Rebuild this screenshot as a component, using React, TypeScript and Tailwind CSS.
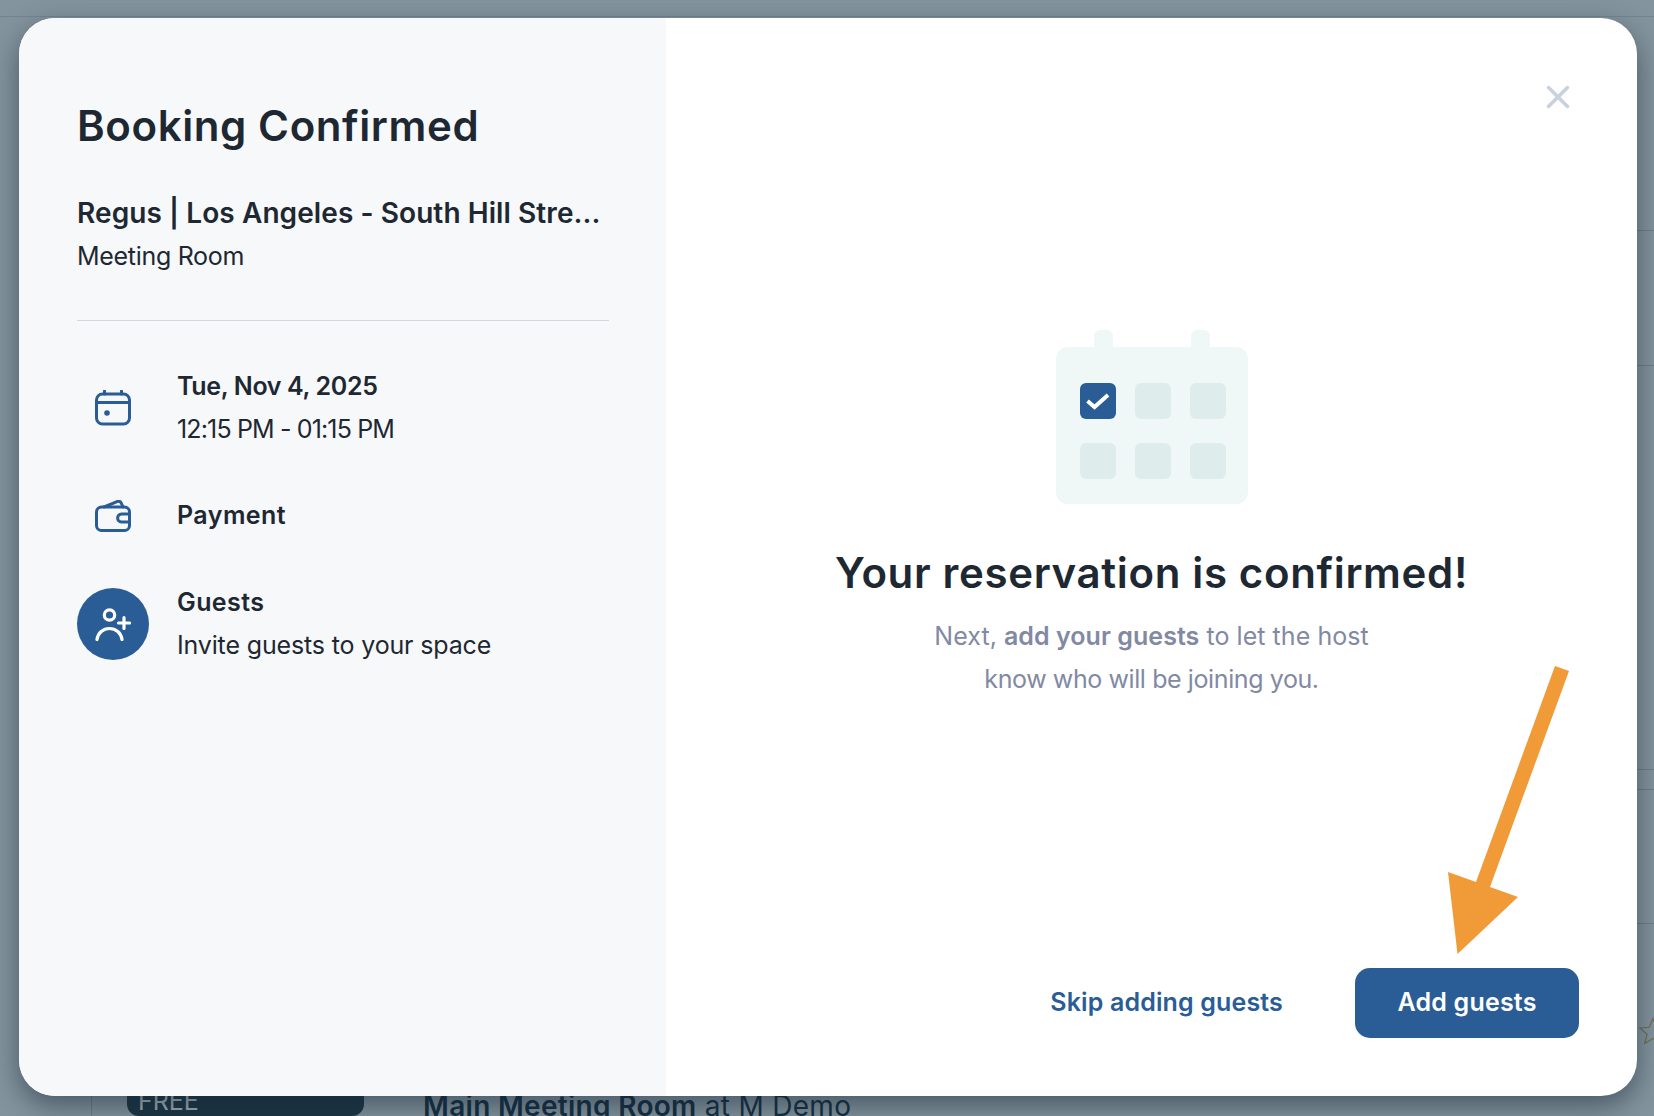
import { X } from "lucide-react"

function CalendarIcon() {
  return (
    <svg width="36" height="36" viewBox="0 0 36 36" fill="none" stroke="#2a5d96" strokeWidth="3" strokeLinecap="round">
      <rect x="1.500" y="4" width="33" height="30" rx="6" />
      <path d="M1.500 12.500H34.500" />
      <path d="M9.500 1V4M26.500 1V4" />
      <circle cx="12" cy="23" r="2.800" fill="#2a5d96" stroke="none" />
    </svg>
  )
}

function WalletIcon() {
  return (
    <svg width="36" height="32" viewBox="0 0 36 32" fill="none" stroke="#2a5d96" strokeWidth="3" strokeLinejoin="round" strokeLinecap="round">
      <rect x="1.500" y="7" width="33" height="23.400" rx="5" />
      <path d="M9 7L22 1.600C24 0.900 25.500 1.600 26.200 3L28 7" />
      <path d="M34.500 14H26.500C24 14 22.600 16 22.600 18C22.600 20 24 22 26.500 22H34.500" />
    </svg>
  )
}

function UserPlusIcon() {
  return (
    <svg width="36" height="33" viewBox="0 0 36 33" fill="none" stroke="#fff" strokeWidth="3.200" strokeLinecap="round">
      <circle cx="14.500" cy="7" r="5.200" />
      <path d="M2 31.500C3 25 8 20.500 14.500 20.500C21 20.500 26 25 27 31.500" />
      <path d="M23.500 15H34.500M29 9.500V20.500" />
    </svg>
  )
}

function Illustration() {
  const cell = "h-9 w-9 rounded-[6px] bg-[#dfecec]"
  return (
    <div className="flex w-[192px] flex-col items-stretch">
      <div className="flex h-[17px] justify-between px-[38px]">
        <div className="w-[19px] rounded-t-[6px] bg-[#eff7f7]" />
        <div className="w-[19px] rounded-t-[6px] bg-[#eff7f7]" />
      </div>
      <div className="grid h-[157px] grid-cols-[36px_36px_36px] content-start gap-x-[19px] gap-y-[24px] rounded-[12px] bg-[#eff7f7] pl-[24px] pt-[36px]">
        <div className="flex h-9 w-9 items-center justify-center rounded-[6px] bg-[#2a5d96]">
          <svg width="24" height="18" viewBox="0 0 24 18" fill="none" stroke="#fff" strokeWidth="4">
            <path d="M1.500 9L8.500 15L22 3" />
          </svg>
        </div>
        <div className={cell} />
        <div className={cell} />
        <div className={cell} />
        <div className={cell} />
        <div className={cell} />
      </div>
    </div>
  )
}

export default function App() {
  return (
    <div className="relative h-[1116px] w-[1654px] overflow-hidden bg-[#84949e] font-['Inter',sans-serif]">
      {/* page behind the backdrop */}
      <div className="h-[17px] border-b border-[#74858f]" />
      <div className="flex flex-col items-end">
        <div className="mt-[213px] h-px w-[20px] bg-[#6d7e88]" />
        <div className="mt-[134px] h-px w-[20px] bg-[#6d7e88]" />
        <div className="mt-[403px] h-px w-[20px] bg-[#6d7e88]" />
        <div className="mt-[19px] h-px w-[20px] bg-[#6d7e88]" />
        <div className="mt-[133px] h-px w-[20px] bg-[#6d7e88]" />
      </div>
      <div className="ml-[91px] mt-[88px] flex h-[104px] items-start border-l border-[#6d7e88] pl-[35px]">
        <div className="mr-[59px] h-[104px] w-[237px] rounded-[12px] bg-[#1c3442] pl-[11px] pt-[74px] text-[25px] leading-[30px] text-[#a9b4ba]">
          FREE
        </div>
        <div className="mt-[78px] text-[28px] leading-[32px] tracking-[0.3px] text-[#142e40]">
          <span className="font-semibold">Main Meeting Room</span> at M Demo
        </div>
      </div>
      <svg className="absolute right-[-14px] top-[1014px]" width="30" height="34" viewBox="0 0 24 24" fill="none" stroke="#736f4a" strokeWidth="1">
        <path d="M12 2l3 7 7.500.6-5.700 5 1.800 7.400L12 18l-6.600 4 1.800-7.400-5.700-5L9 9z" />
      </svg>

      {/* modal */}
      <div className="absolute left-[19px] top-[18px] flex h-[1078px] w-[1618px] overflow-hidden rounded-[36px] bg-white shadow-[0_10px_28px_rgba(20,40,55,0.55)]">
        <div className="flex w-[647px] shrink-0 flex-col bg-[#f7f8fa] pl-[58px] pr-[57px] pt-[82px] text-[#1e2832]">
          <h1 className="text-[42px] font-semibold leading-[52px] tracking-[0.6px]">Booking Confirmed</h1>
          <div className="mt-[43px] truncate text-[28px] font-semibold leading-[36px] tracking-[0.08px]">
            Regus | Los Angeles - South Hill Stre...
          </div>
          <div className="mt-[7px] text-[25px] leading-[36px] tracking-[-0.3px]">Meeting Room</div>
          <div className="mt-[46px] h-px bg-[#d3d8df]" />
          <div className="mt-[44px] flex items-center">
            <div className="flex w-[100px] shrink-0 pl-[18px]">
              <CalendarIcon />
            </div>
            <div>
              <div className="text-[25px] font-semibold leading-[43px] tracking-[-0.35px]">Tue, Nov 4, 2025</div>
              <div className="text-[25px] leading-[43px] tracking-[-0.85px]">12:15 PM - 01:15 PM</div>
            </div>
          </div>
          <div className="mt-[43px] flex items-center">
            <div className="flex w-[100px] shrink-0 pl-[18px]">
              <WalletIcon />
            </div>
            <div className="text-[25px] font-semibold leading-[43px] tracking-[0.45px]">Payment</div>
          </div>
          <div className="mt-[44px] flex items-center">
            <div className="w-[100px] shrink-0">
              <div className="flex h-[72px] w-[72px] items-center justify-center rounded-full bg-[#2a5d96]">
                <UserPlusIcon />
              </div>
            </div>
            <div>
              <div className="text-[25px] font-semibold leading-[43px] tracking-[0.4px]">Guests</div>
              <div className="text-[25px] leading-[43px] tracking-[-0.15px]">Invite guests to your space</div>
            </div>
          </div>
        </div>

        <div className="flex min-w-0 flex-1 flex-col">
          <div className="flex justify-end pr-[60px] pt-[60px]">
            <X className="h-[38px] w-[38px] text-[#c9d1de]" strokeWidth={2.2} />
          </div>
          <div className="mt-[214px] flex flex-col items-center">
            <Illustration />
            <h2 className="mt-[41px] text-[42px] font-semibold leading-[56px] tracking-[0.65px] text-[#1e2832]">
              Your reservation is confirmed!
            </h2>
            <p className="mt-[14px] text-center text-[25px] leading-[43px] tracking-[0.05px] text-[#8289a3]">
              Next, <span className="font-semibold">add your guests</span> to let the host
              <br />
              <span className="tracking-[-0.4px]">know who will be joining you.</span>
            </p>
          </div>
          <div className="mt-auto flex items-center justify-end gap-[72px] pb-[58px] pr-[58px]">
            <button className="text-[25px] font-semibold tracking-[0.15px] text-[#2a5d96]">Skip adding guests</button>
            <button className="h-[70px] w-[224px] rounded-[15px] bg-[#2a5d96] text-[25px] font-semibold tracking-[0.2px] text-white">
              Add guests
            </button>
          </div>
        </div>
      </div>

      {/* annotation arrow */}
      <svg className="absolute left-[1440px] top-[660px]" width="140" height="300" viewBox="1440 660 140 300" fill="#f19a38">
        <path d="M1555 666L1569 671L1490 887L1518 897L1457.500 954L1448 872L1476 882Z" />
      </svg>
    </div>
  )
}
